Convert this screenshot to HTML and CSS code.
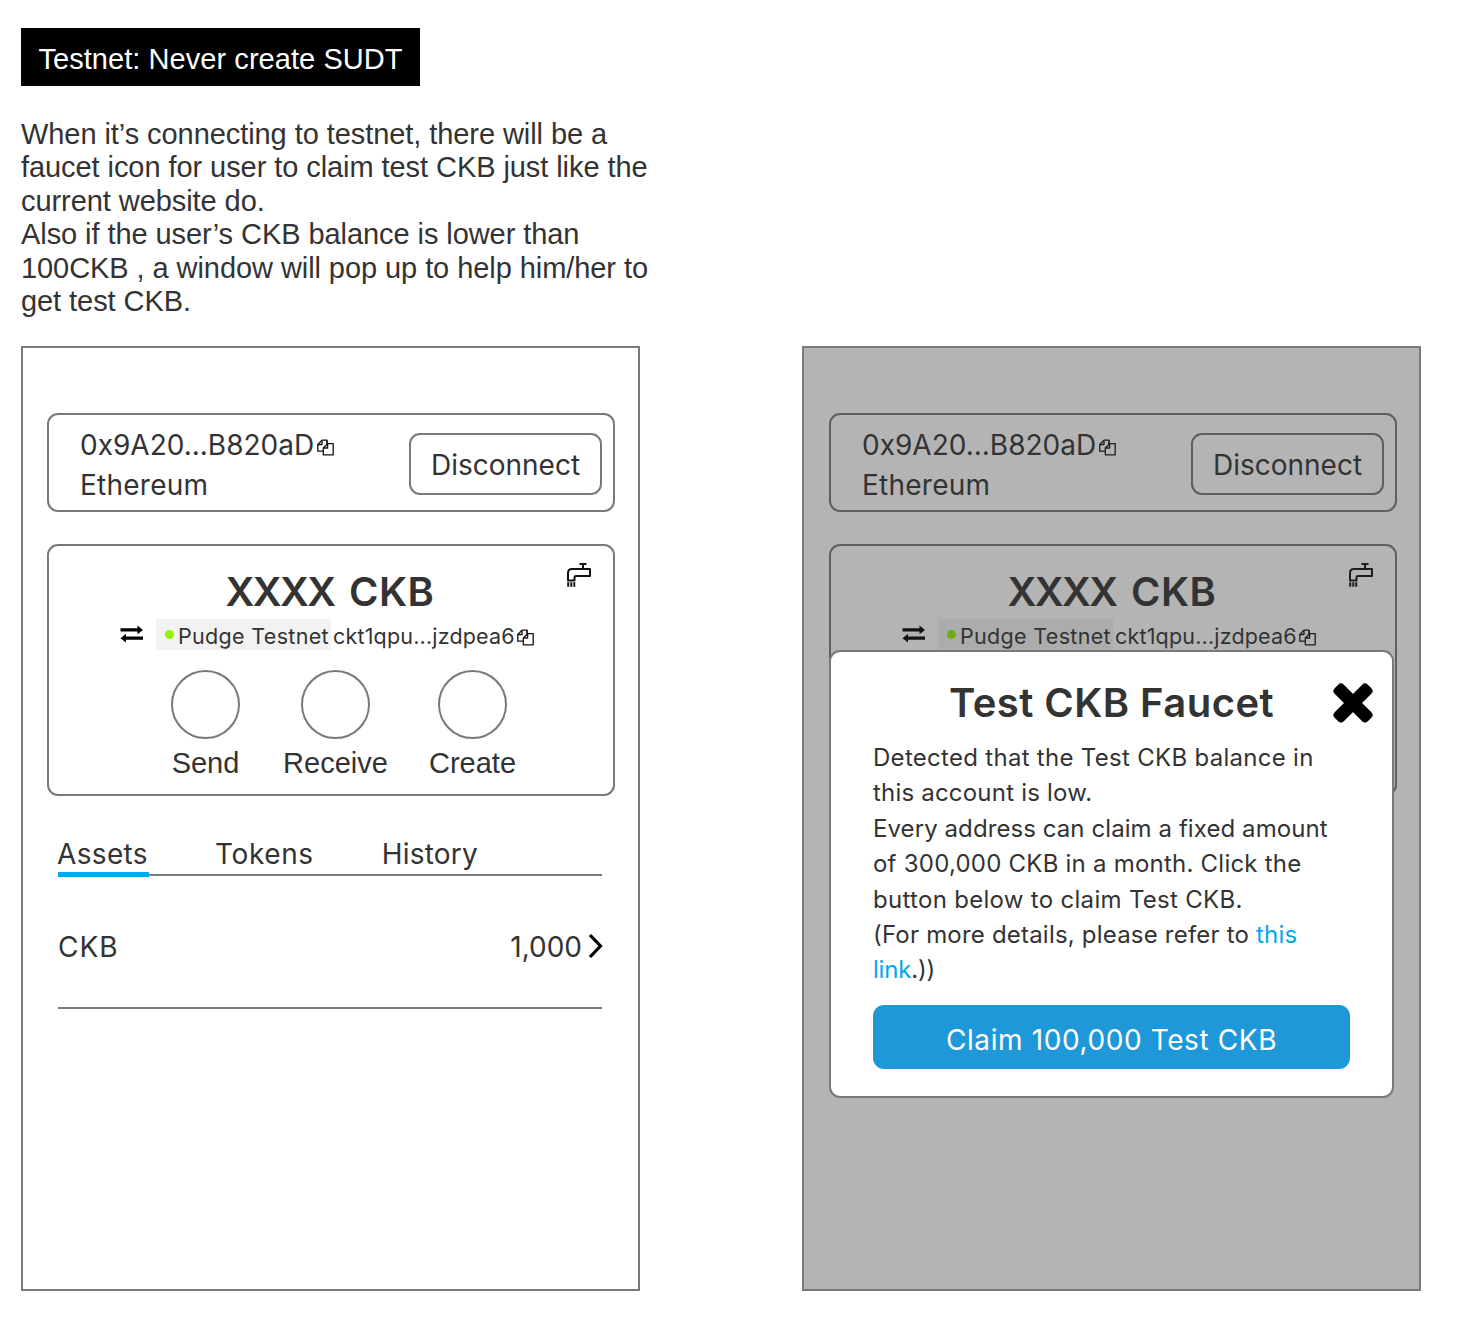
FILE: index.html
```html
<!DOCTYPE html>
<html lang="en">
<head>
<meta charset="utf-8">
<title>Testnet: Never create SUDT</title>
<link rel="stylesheet" href="styles.css">
</head>
<body>
<svg class="sprite" aria-hidden="true">
  <symbol id="copy" viewBox="0 0 17 17"><g fill="#fff" fill-opacity="0" stroke="#111" stroke-width="1.3" stroke-linejoin="round"><path d="M6.2 12.2H.8V5.4L5 1.2h5v3.4"/><path d="M5 1.4v4.1H1"/><path d="M10.6 4.7h5.6v11.1H6.3V9z"/><path d="M10.6 4.9V9H6.5M10 1.2v3.9"/></g></symbol>
  <symbol id="swap" viewBox="0 0 24 18"><path d="M.5 3.2H17.500V.5L23 5l-5.500 4.300V6.600H.5zM23 11.400H6V8.700L.5 13.200 6 17.500v-2.700h17z"/></symbol>
  <symbol id="faucet" viewBox="0 0 26 26"><g fill="none" stroke="#111" stroke-width="2"><path d="M13.500 2h7M17 2v5" /><path d="M24 7v7h-14c-1 0-1.500.5-1.500 1.500V18.500H2V11c0-2.500 1.500-4 4-4z" stroke-linejoin="round"/><path d="M2.200 20.300v4.500M5.300 20.300v4.500M8.300 20.300v4.500"/></g></symbol>
</svg>
<main class="page">
  <h1 class="banner">Testnet: Never create SUDT</h1>
  <p class="intro">When it’s connecting to testnet, there will be a<br>faucet icon for user to claim test CKB just like the<br>current website do.<br>Also if the user’s CKB balance is lower than<br>100CKB , a window will pop up to help him/her to<br>get test CKB.</p>
  <div class="screens">
    <section class="screen">
      <div class="card account">
        <div class="identity">
          <div class="account-line"><span class="hash">0x9A20...B820aD</span><svg class="copy"><use href="#copy"/></svg></div>
          <div class="chain">Ethereum</div>
        </div>
        <button class="disconnect">Disconnect</button>
      </div>
      <div class="card wallet">
        <svg class="faucet"><use href="#faucet"/></svg>
        <h2 class="balance"><span class="figure">XXXX</span> CKB</h2>
        <div class="address">
          <svg class="swap"><use href="#swap"/></svg>
          <span class="network"><i class="dot"></i><span class="network-name">Pudge Testnet</span></span>
          <span class="ckt">ckt1qpu...jzdpea6</span><svg class="copy"><use href="#copy"/></svg>
        </div>
        <div class="actions">
          <div class="action"><i class="circle"></i>Send</div>
          <div class="action"><i class="circle"></i>Receive</div>
          <div class="action"><i class="circle"></i>Create</div>
        </div>
      </div>
      <nav class="tabs"><span class="tab active">Assets</span><span class="tab tokens">Tokens</span><span class="tab history">History</span></nav>
      <div class="asset"><span class="asset-name">CKB</span><span class="amount">1,000</span><svg class="chevron" viewBox="0 0 15 26"><path d="M2 2l10.500 11L2 24" fill="none" stroke="#000" stroke-width="3.2"/></svg></div>
    </section>
    <section class="screen dimmed">
      <div class="card account">
        <div class="identity">
          <div class="account-line"><span class="hash">0x9A20...B820aD</span><svg class="copy"><use href="#copy"/></svg></div>
          <div class="chain">Ethereum</div>
        </div>
        <button class="disconnect">Disconnect</button>
      </div>
      <div class="card wallet">
        <svg class="faucet"><use href="#faucet"/></svg>
        <h2 class="balance"><span class="figure">XXXX</span> CKB</h2>
        <div class="address">
          <svg class="swap"><use href="#swap"/></svg>
          <span class="network"><i class="dot"></i><span class="network-name">Pudge Testnet</span></span>
          <span class="ckt">ckt1qpu...jzdpea6</span><svg class="copy"><use href="#copy"/></svg>
        </div>
      </div>
      <div class="overlay"></div>
      <div class="modal">
        <svg class="close" viewBox="0 0 42 42"><path d="M9 9l24 24M33 9L9 33" stroke="#000" stroke-width="10" stroke-linecap="square"/><path d="M9 5.500L36.500 33 33 36.500 5.500 9zM33 5.500L5.500 33 9 36.500 36.500 9z" stroke="#000" stroke-width="8" stroke-linejoin="round"/></svg>
        <h2 class="modal-title">Test CKB Faucet</h2>
        <p class="modal-text"><span class="l1">Detected that the Test CKB balance in</span><br><span class="l2">this account is low.</span><br><span class="l3">Every address can claim a fixed amount</span><br><span class="l4">of 300,000 CKB in a month. Click the</span><br><span class="l5">button below to claim Test CKB.</span><br><span class="l6">(For more details, please refer to <a>this</a></span><br><span class="l7"><a>link</a>.))</span></p>
        <button class="claim">Claim 100,000 Test CKB</button>
      </div>
    </section>
  </div>
</main>
</body>
</html>
```
FILE: styles.css
```css
* { box-sizing: border-box; }
body { margin: 0; background: #fff; color: #333; font-family: Inter, "Liberation Sans", sans-serif; }
h1, h2, p { margin: 0; }
button { font: inherit; color: inherit; padding: 0; }
.sprite { position: absolute; width: 0; height: 0; }
.page { height: 1340px; padding: 28px 0 0 21px; }
.banner { width: 399px; height: 58px; background: #000; color: #fff; text-align: center; font: 400 29px/63px "Liberation Sans", Arial, sans-serif; letter-spacing: .06px; }
.intro { margin-top: 32px; height: 200px; white-space: nowrap; font: 29px/33.4px "Liberation Sans", Arial, sans-serif; letter-spacing: -.07px; }
.screens { margin-top: 28px; display: flex; gap: 162px; }
.screen { position: relative; width: 619px; height: 945px; padding: 65px 23px 0 24px; border: 2px solid #797979; }
.dimmed { padding-left: 25px; padding-right: 22px; }
.card { width: 568px; border: 2px solid #797979; border-radius: 11px; }
.account { height: 99px; display: flex; justify-content: space-between; padding: 10px 11px 0 31px; }
.account-line { display: flex; align-items: center; }
.identity { font-size: 28px; line-height: 40px; white-space: nowrap; }
.chain { letter-spacing: .25px; }
.copy { width: 17px; height: 17px; margin: 4px 0 0 3px; flex: none; }
.disconnect { width: 193px; height: 62px; margin-top: 8px; padding-top: 2px; border: 2px solid #797979; border-radius: 11px; background: none; font-size: 28px; }
.wallet { position: relative; height: 252px; margin-top: 32px; padding-top: 21px; }
.faucet { position: absolute; right: 21px; top: 16px; width: 26px; height: 26px; }
.balance { height: 50px; padding-right: 2px; font-size: 40px; line-height: 50px; font-weight: 600; text-align: center; letter-spacing: .5px; word-spacing: 4px; }
.figure { letter-spacing: -1.600px; }
.address { display: flex; align-items: center; height: 31px; margin-top: 2px; padding-left: 71px; font-size: 21.500px; line-height: 34px; white-space: nowrap; letter-spacing: .18px; }
.swap { width: 24px; height: 18px; margin: 0 12px 2px 0; }
.network { display: flex; align-items: center; width: 175px; height: 31px; padding-left: 9px; background: #f2f2f2; }
.network-name { padding-top: 2px; letter-spacing: .32px; }
.dot { width: 9px; height: 9px; margin: 0 4px 1px 0; border-radius: 50%; background: #95f204; }
.ckt { margin-left: 2px; padding-top: 2px; }
.address .copy { margin-left: 2px; margin-top: 6px; }
.actions { display: flex; margin-top: 20px; padding-left: 101.500px; }
.action { display: flex; flex-direction: column; align-items: center; width: 110px; font: 29px/33px "Liberation Sans", Arial, sans-serif; }
.action + .action { margin-left: 20px; }
.action:last-child { margin-left: 27px; }
.circle { width: 69px; height: 69px; margin-bottom: 8px; border: 2px solid #797979; border-radius: 50%; }
.tabs { display: flex; width: 544px; height: 44px; margin: 36px 0 0 11px; border-bottom: 2px solid #797979; font-size: 28px; line-height: 44px; letter-spacing: .35px; }
.tab.active { width: 91px; height: 45px; border-bottom: 5px solid #02a7f0; text-indent: -1px; }
.tokens { margin-left: 66px; letter-spacing: .6px; }
.history { margin-left: 68px; letter-spacing: .2px; }
.asset { display: flex; align-items: center; width: 544px; height: 133px; margin-left: 11px; padding-top: 11px; border-bottom: 2px solid #797979; font-size: 28px; }
.asset-name { letter-spacing: 1px; }
.amount { margin-left: auto; }
.chevron { width: 15px; height: 26px; margin: 0 -1px 2px 6px; }
.overlay { position: absolute; inset: 0; background: rgba(51, 51, 51, .37); }
.modal { position: absolute; left: 25px; top: 302px; width: 565px; height: 448px; padding: 25px 42px 0; background: #fff; border: 2px solid #797979; border-radius: 11px; }
.close { position: absolute; right: 18px; top: 30px; width: 42px; height: 42px; }
.modal-title { font-size: 40px; line-height: 52px; font-weight: 600; text-align: center; white-space: nowrap; letter-spacing: .45px; }
.modal-text { height: 248px; margin-top: 11px; font-size: 24px; line-height: 35.400px; white-space: nowrap; }
.modal-text a { color: #02a7f0; }
.l1 { letter-spacing: .29px; }
.l2 { letter-spacing: .2px; }
.l3 { letter-spacing: .08px; }
.l4 { letter-spacing: .23px; }
.l5 { letter-spacing: .3px; }
.l6 { letter-spacing: .2px; }
.l7 { letter-spacing: -.2px; }
.claim { display: block; width: 477px; height: 64px; margin-top: 17px; border: 0; border-radius: 11px; background: #1f98d9; color: #fff; font-size: 28px; padding-top: 6px; letter-spacing: .6px; }
```
